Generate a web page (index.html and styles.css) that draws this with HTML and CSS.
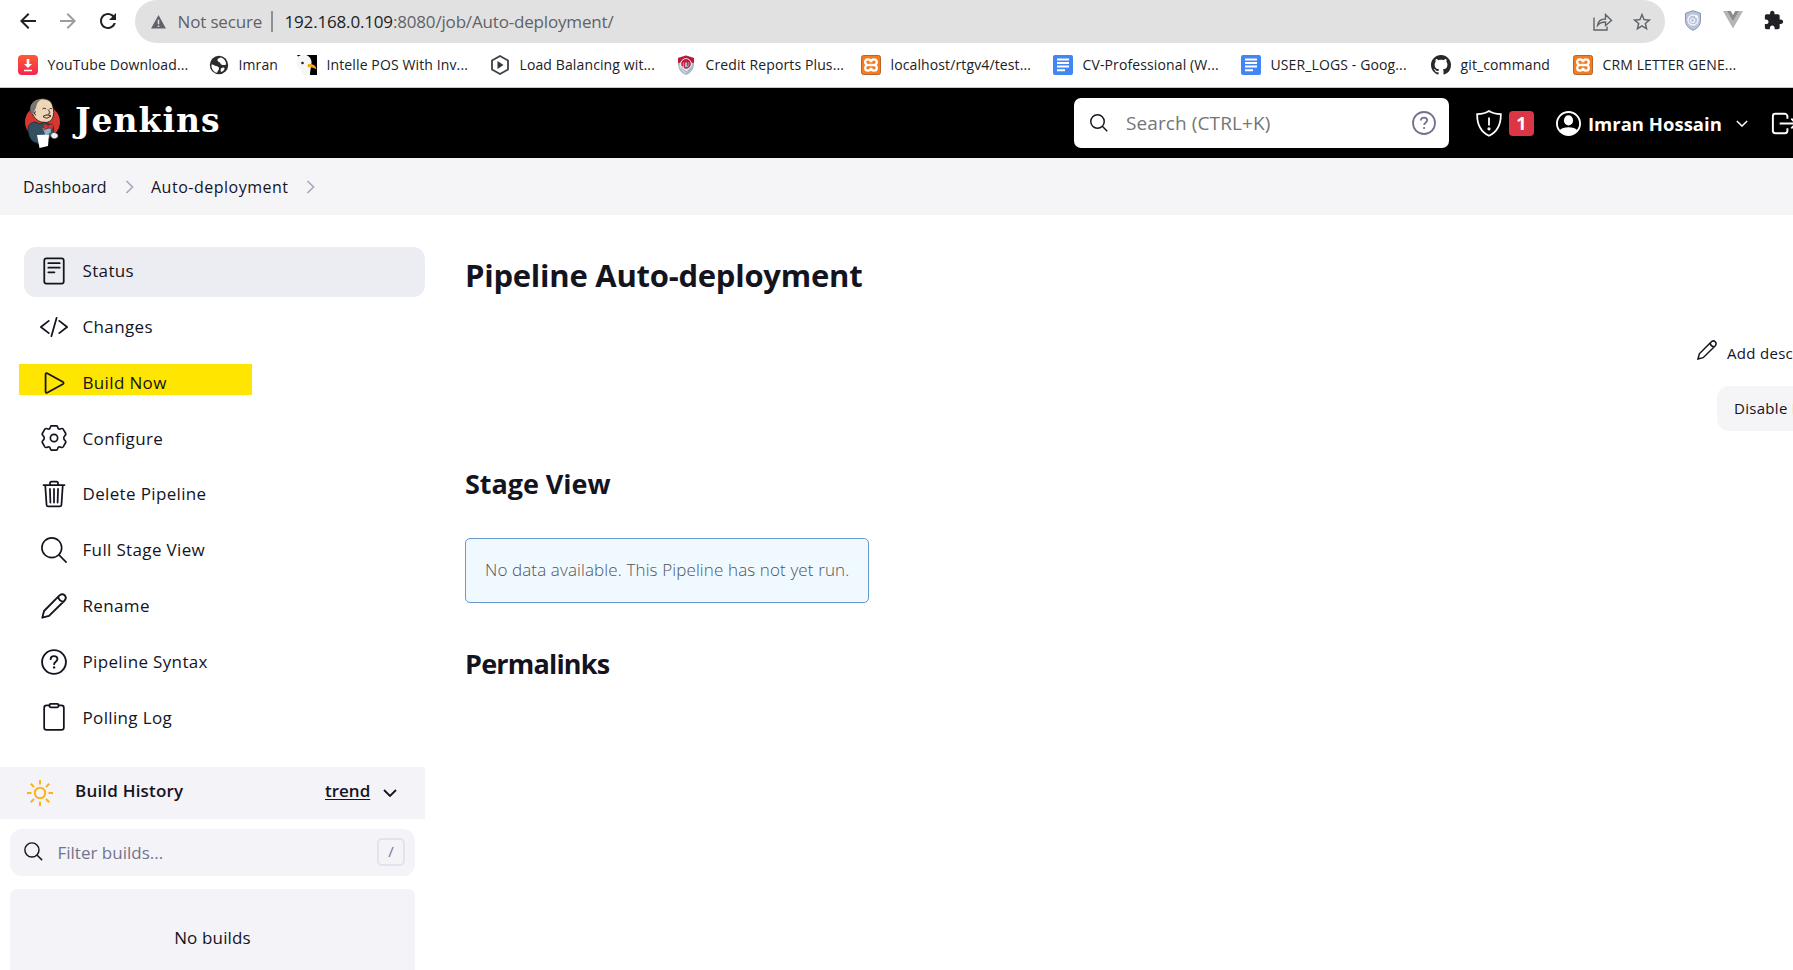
FILE: index.html
```html
<!DOCTYPE html>
<html lang="en">
<head>
<meta charset="utf-8">
<title>Auto-deployment [Jenkins]</title>
<link rel="stylesheet" href="styles.css">
</head>
<body>
<svg class="defs" width="0" height="0">
  <symbol id="search" viewBox="0 0 512 512"><path d="M221.09 64a157.09 157.09 0 10157.09 157.09A157.1 157.1 0 00221.09 64zM338.29 338.29L448 448"/></symbol>
  <symbol id="pencil" viewBox="0 0 24 24"><path d="M1.2 22.8L2.8 16.6 16.6 2.6C18.3.9 20.3.7 21.9 2.1 23.3 3.7 23.1 5.7 21.4 7.4L7.4 21.2zM16 3.200C16 6 18 8 20.900 8"/></symbol>
  <symbol id="help" viewBox="0 0 24 24"><circle cx="12" cy="12" r="11"/><path d="M8.9 9.4C8.9 7.6 10.2 6.6 12 6.6s3.2 1.1 3.2 2.7c0 2.4-3.1 2.4-3.1 4.7"/><circle class="dot" cx="12.1" cy="17" r="1.1"/></symbol>
  <symbol id="chev-r" viewBox="0 0 8 14"><path d="M1 1l6 6-6 6"/></symbol>
  <symbol id="chev-d" viewBox="0 0 14 8"><path d="M1 1l6 6 6-6"/></symbol>
  <symbol id="xampp" viewBox="0 0 20 20"><rect x=".5" y=".5" width="19" height="19" rx="2" fill="#f37b22" stroke="#b8652d"/><path d="M10 7.2C10 5 8.500 4.300 7 4.300S4.200 5.300 4.200 7 5.300 9.600 6.500 10C5.300 10.400 4.200 11.300 4.200 13S5.500 15.700 7 15.700 10 15 10 12.800C10 15 11.500 15.700 13 15.700S15.800 14.700 15.800 13 14.700 10.400 13.500 10C14.700 9.600 15.800 8.700 15.800 7S14.500 4.300 13 4.300 10 5 10 7.200zM7.500 10h5" fill="none" stroke="#fff" stroke-width="2.300"/></symbol>
  <symbol id="doc" viewBox="0 0 20 20"><rect width="20" height="20" rx="2" fill="#4285f4"/><path d="M4 4.500h12M4 8h12M4 11.500h12M4 15.200h8" stroke="#fff" stroke-width="1.900"/></symbol>
</svg>

<div class="toolbar">
  <svg class="nav" viewBox="0 0 24 24"><path d="M20 11H7.830l5.590-5.590L12 4l-8 8 8 8 1.410-1.410L7.830 13H20v-2z"/></svg>
  <svg class="nav fwd" viewBox="0 0 24 24"><path d="M12 4l-1.410 1.410L16.170 11H4v2h12.170l-5.580 5.590L12 20l8-8z"/></svg>
  <svg class="nav" viewBox="0 0 24 24"><path d="M17.650 6.350C16.200 4.900 14.210 4 12 4c-4.420 0-7.990 3.580-7.990 8s3.570 8 7.990 8c3.730 0 6.840-2.550 7.730-6h-2.080c-.820 2.330-3.040 4-5.650 4-3.310 0-6-2.690-6-6s2.690-6 6-6c1.660 0 3.140.690 4.220 1.780L13 11h7V4l-2.350 2.350z"/></svg>
  <div class="omnibox">
    <svg class="warn" viewBox="0 0 16 15"><path d="M8 0l8 14.500H0z" fill="#5f6368"/><path d="M8 5v5M8 11.200v1.600" stroke="#e1e1e1" stroke-width="1.600"/></svg>
    <span class="insecure">Not secure</span>
    <span class="url"><b>192.168.0.109</b>:8080/job/Auto-deployment/</span>
    <svg class="share" viewBox="0 0 20 18"><path d="M1 4.500V17h13v-3.500M4.500 12.500C5 8.500 8 6 12.500 6V1.500L18.500 7.500 12.500 12.500V9C9 9 6.500 10 4.500 12.500z"/></svg>
    <svg class="star" viewBox="0 0 24 24"><path d="M22 9.240l-7.190-.620L12 2 9.190 8.630 2 9.240l5.460 4.730L5.820 21 12 17.270 18.180 21l-1.630-7.030L22 9.240zM12 15.400l-3.760 2.270 1-4.280-3.320-2.880 4.380-.380L12 6.100l1.710 4.040 4.380.380-3.320 2.880 1 4.280L12 15.400z"/></svg>
  </div>
  <svg class="ext" width="18" height="21" viewBox="0 0 18 21"><path d="M9 .700l7.500 2.600v7C16.500 15 13.500 18.500 9 20.300 4.500 18.500 1.500 15 1.500 10.300v-7z" fill="#b9c3da" stroke="#8995b5"/><circle cx="9" cy="10" r="5" fill="none" stroke="#f1f4fa" stroke-width="1.400"/><circle cx="8.500" cy="10.500" r="2" fill="none" stroke="#f1f4fa" stroke-width="1.200"/><circle cx="12.500" cy="6.500" r="1.200" fill="#fff"/></svg>
  <svg class="ext" width="20" height="18" viewBox="0 0 20 18"><path d="M0 0h4l6 10.500L16 0h4L10 17.500z" fill="#b5b5b5"/><path d="M4 0h3.800L10 4l2.200-4H16l-6 10.500z" fill="#8a8a8a"/></svg>
  <svg class="ext puzzle" width="20" height="20" viewBox="1 0 23 23"><path d="M20.500 11H19V7c0-1.100-.900-2-2-2h-4V3.500C13 2.120 11.880 1 10.500 1S8 2.120 8 3.500V5H4c-1.100 0-1.990.900-1.990 2v3.800H3.500c1.490 0 2.700 1.210 2.700 2.700s-1.210 2.700-2.700 2.700H2V20c0 1.100.900 2 2 2h3.800v-1.500c0-1.490 1.210-2.700 2.700-2.700s2.700 1.210 2.700 2.700V22H17c1.100 0 2-.900 2-2v-4h1.500c1.380 0 2.500-1.120 2.500-2.500S21.880 11 20.500 11z" fill="#202124"/></svg>
</div>

<div class="bookmarks">
  <a class="bm"><svg viewBox="0 0 20 20"><defs><linearGradient id="yt" x2="0" y2="1"><stop stop-color="#fb5d33"/><stop offset="1" stop-color="#f5254f"/></linearGradient></defs><rect width="20" height="20" rx="4" fill="url(#yt)"/><path d="M8.700 4h2.600v5h2.700L10 13 6 9h2.700zM6 14.700h8v1.600H6z" fill="#fff"/></svg><span>YouTube Download...</span></a>
  <a class="bm"><svg viewBox="0 0 20 20"><circle cx="10" cy="10" r="9.200" fill="#292b2e"/><path d="M2.500 9.500c2-.500 3 1 4.500 1.500s3 .500 3 2.500-1.500 2-2 4.300C4.500 17 2 13.500 2.500 9.500zM12 2.500c-2.500.500-4 1.500-3.500 3S11 7 11.500 8.500s3 2 5.700 1C17 6 15 3.500 12 2.500zM12.500 13c1.500-1 3.500-.500 3 1s-2 2.500-3.500 3c-.500-1.500-.500-3 .500-4z" fill="#fff"/></svg><span>Imran</span></a>
  <a class="bm"><svg viewBox="0 0 20 20"><path d="M9 0h11v20h-8C14 14 14 5 9 0z" fill="#000"/><path d="M0 0h9c5 2 6.500 6 5 11-.500 4-1 6-1 9H6C5 15 1 14 0 10z" fill="#f6f6f5"/><path d="M0 0h4L1 1.500z" fill="#000"/><circle cx="5.500" cy="8" r="1.300" fill="#222"/><path d="M11 9c4-.500 8 1 8.500 5.500C16.500 12 13 13 10.500 12z" fill="#f9a51a"/></svg><span>Intelle POS With Inv...</span></a>
  <a class="bm"><svg viewBox="0 0 20 20"><path d="M10 1l8 4.500v9L10 19l-8-4.500v-9z" fill="#fff" stroke="#3c4248" stroke-width="1.800"/><path d="M7.500 6l6 4-6 4z" fill="#33383d"/></svg><span>Load Balancing wit...</span></a>
  <a class="bm"><svg viewBox="0 0 20 20"><path d="M10 .500l8 2.500v6c0 5-3 9-8 11-5-2-8-6-8-11V3z" fill="#a9b8c7"/><path d="M10 .500l8 2.500v5L10 7 2 8V3z" fill="#bd1839"/><g fill="none"><circle cx="10" cy="9" r="5.300" stroke="#fff"/><circle cx="10" cy="9" r="4" stroke="#c21c40" stroke-width="1.500"/><path d="M8.300 12V8.500c0-2.500 3.500-2.500 3.500 0V11" stroke="#c21c40" stroke-width="1.200"/><path d="M4 10c0 4 3 6 6 8M7 11c0 3 2 4 5 5" stroke="#e7edf2"/></g></svg><span>Credit Reports Plus...</span></a>
  <a class="bm"><svg><use href="#xampp"/></svg><span>localhost/rtgv4/test...</span></a>
  <a class="bm"><svg><use href="#doc"/></svg><span>CV-Professional (W...</span></a>
  <a class="bm"><svg><use href="#doc"/></svg><span>USER_LOGS - Goog...</span></a>
  <a class="bm"><svg viewBox="0 0 16 16"><path d="M8 0C3.580 0 0 3.580 0 8c0 3.540 2.290 6.530 5.470 7.590.400.070.550-.170.550-.380 0-.190-.010-.820-.010-1.490-2.010.370-2.530-.490-2.690-.940-.090-.230-.480-.940-.820-1.130-.280-.150-.680-.520-.010-.530.630-.010 1.080.580 1.230.820.720 1.210 1.870.870 2.330.660.070-.520.280-.870.510-1.070-1.780-.200-3.640-.890-3.640-3.950 0-.870.310-1.590.820-2.150-.080-.200-.360-1.020.080-2.120 0 0 .670-.210 2.200.820.640-.180 1.320-.270 2-.270s1.360.090 2 .270c1.530-1.040 2.200-.820 2.200-.820.440 1.100.160 1.920.080 2.120.510.560.820 1.270.820 2.150 0 3.070-1.870 3.750-3.650 3.950.290.250.540.730.540 1.480 0 1.070-.010 1.930-.010 2.200 0 .210.150.460.550.380A8.010 8.010 0 0016 8c0-4.420-3.580-8-8-8z" fill="#24292e"/></svg><span>git_command</span></a>
  <a class="bm"><svg><use href="#xampp"/></svg><span>CRM LETTER GENE...</span></a>
</div>

<header class="header">
  <svg class="butler" viewBox="0 0 37 51">
    <ellipse cx="18.500" cy="24" rx="17.500" ry="17" fill="#d33833"/>
    <path d="M8.500 16C5 14 6 7 9.500 4c5-5 16.500-4 18.500 2 1.500 4 2 8 1.500 11-1 5-4 7.500-9 7.500C14.500 24 11 21 8.500 16z" fill="#efd6b9" stroke="#1b1311" stroke-width=".800"/>
    <path d="M12 2.500C6 5 5 11 8 16l2.200-.500c-.200-3 1.300-3.500 1.800-6C13 7 12 5 17 1.500z" fill="#7b7676"/>
    <path d="M18.500 11c1-1 2.500-1 3.500 0M25.500 11c1-.700 2-.700 2.500 0M24 11.500c2 2.500 2.500 4.500 0 4.500M19 18.500c3-2 5-2 8-.500-3 1.500-4 3.500-8 .500zM12 14c-2-1-2 3 0 3" fill="none" stroke="#2b1b17" stroke-width="1"/>
    <path d="M11 24c-5 1-6.500 3-7 7 .500 6 2 11 6 13l5 2 10-7 4-1c1-5 1-9-1-11l-8-3-4 2z" fill="#335061" stroke="#142630" stroke-width=".800"/>
    <path d="M18.500 30l5 1 4-2-1 6-5 2z" fill="#8fb3c4"/>
    <path d="M19.500 25.500l4.500 2.300 4.500-2.300c1 2 .500 4 0 6l-4.500-2-3.500 2.500c-1-2-1-4-1-6.500z" fill="#d33833" stroke="#81201e" stroke-width=".600"/>
    <path d="M13 37l12-.500-1 11.500-8.500 2z" fill="#fff"/>
    <path d="M26.500 37c2-3 4-3 6-1.500 2 .500 2 4 0 4.500-2 1.500-5 1-6-3z" fill="#eee" stroke="#39444b" stroke-width=".700"/>
  </svg>
  <span class="wordmark">Jenkins</span>
  <div class="searchbox">
    <svg class="ico"><use href="#search"/></svg>
    <span>Search (CTRL+K)</span>
    <svg class="qm"><use href="#help"/></svg>
  </div>
  <svg class="shield" viewBox="0 0 26 27"><path d="M13 1C10 3 6 4 1.200 4.200 1 14 4 21.500 13 25.800 22 21.500 25 14 24.800 4.200 20 4 16 3 13 1zM13 7.500v8"/><circle cx="13" cy="18.800" r=".700"/></svg>
  <span class="badge">1</span>
  <svg class="user" viewBox="0 0 24 24"><circle cx="12" cy="12" r="11.100" fill="none" stroke="#fff" stroke-width="1.800"/><ellipse cx="12" cy="9" rx="4.400" ry="4.900" fill="#fff"/><path d="M3.500 18.500C6 14.500 18 14.500 20.500 18.500 18 22 15 23 12 23s-6-1-8.500-4.500z" fill="#fff"/></svg>
  <span class="name">Imran Hossain</span>
  <svg class="namechev"><use href="#chev-d"/></svg>
  <svg class="logout" viewBox="0 0 512 512"><path d="M304 336v40a40 40 0 01-40 40H104a40 40 0 01-40-40V136a40 40 0 0140-40h152c22.090 0 48 17.910 48 40v40M368 336l80-80-80-80M176 256h256"/></svg>
</header>

<nav class="crumbs">
  <span class="c1">Dashboard</span><svg><use href="#chev-r"/></svg>
  <span class="c2">Auto-deployment</span><svg><use href="#chev-r"/></svg>
</nav>

<div class="page">
  <aside class="side">
    <div class="tasks">
      <a class="task active"><svg viewBox="0 0 512 512"><rect x="78" y="24" width="356" height="464" rx="40"/><path d="M152 112h208M152 196h208M152 280h112"/></svg><span>Status</span></a>
      <a class="task"><svg viewBox="0 0 512 512"><path d="M160 368L16 256l144-112M352 368l144-112-144-112M304 88l-96 336"/></svg><span>Changes</span></a>
      <a class="task marked"><svg viewBox="0 0 512 512"><path d="M102 96v320c0 16 14 24 28 17l292-160c12-7 12-27 0-34L130 79c-14-7-28 1-28 17z"/></svg><span>Build Now</span></a>
      <a class="task"><svg class="gear" viewBox="-12.500 -12.500 25 25"><path d="M-2.400-11.600H2.400Q3.500-11.600 3.500-10.400 3.800-8 5.800-8.600 8-9.700 8.800-8.500L11.100-4.600Q11.700-3.400 10.700-2.600 8 0 10.700 2.600 11.700 3.400 11.100 4.600L8.800 8.500Q8 9.700 5.800 8.600 3.800 8 3.500 10.400 3.500 11.600 2.400 11.600H-2.400Q-3.500 11.600-3.500 10.400-3.800 8-5.800 8.600-8 9.700-8.800 8.500L-11.100 4.600Q-11.700 3.400-10.700 2.600-8 0-10.700-2.600-11.700-3.400-11.100-4.600L-8.800-8.500Q-8-9.700-5.800-8.600-3.800-8-3.500-10.400-3.500-11.600-2.400-11.600z"/><circle r="3.500"/></svg><span>Configure</span></a>
      <a class="task"><svg viewBox="0 0 512 512"><path d="M96 100l24 356c1 18 14 28 30 28h212c16 0 29-10 30-28l24-356M64 92h384M182 90V60c0-18 12-30 30-30h88c18 0 30 12 30 30v30M256 164v248M182 164l8 248M330 164l-8 248"/></svg><span>Delete Pipeline</span></a>
      <a class="task"><svg class="mag" viewBox="34 34 444 444"><path d="M221 64a157 157 0 10157 157A157 157 0 00221 64zM338 338L448 448"/></svg><span>Full Stage View</span></a>
      <a class="task"><svg class="pen"><use href="#pencil"/></svg><span>Rename</span></a>
      <a class="task"><svg class="hlp"><use href="#help"/></svg><span>Pipeline Syntax</span></a>
      <a class="task"><svg viewBox="0 0 512 512"><path d="M336 42h56a44 44 0 0144 44v360a44 44 0 01-44 44H120a44 44 0 01-44-44V86a44 44 0 0144-44h56"/><rect x="170" y="16" width="172" height="64" rx="28"/></svg><span>Polling Log</span></a>
    </div>
    <div class="history">
      <svg class="sun" viewBox="-13 -13 26 26"><circle r="5.200"/><path d="M0-13v4.500M0 13V8.500M-13 0h4.500M13 0H8.500M-9.200-9.200l3.200 3.200M9.200 9.200L6 6M-9.200 9.200L-6 6M9.200-9.200L6-6"/></svg>
      <b>Build History</b><u>trend</u><svg class="hchev"><use href="#chev-d"/></svg>
    </div>
    <div class="filter"><svg><use href="#search"/></svg><span>Filter builds...</span><kbd>/</kbd></div>
    <div class="none">No builds</div>
  </aside>
  <main class="main">
    <h1>Pipeline Auto-deployment</h1>
    <div class="actions">
      <a class="add"><svg><use href="#pencil"/></svg><span>Add description</span></a>
      <a class="disable">Disable Project</a>
    </div>
    <h2 class="stage">Stage View</h2>
    <div class="notice">No data available. This Pipeline has not yet run.</div>
    <h2 class="perma">Permalinks</h2>
  </main>
</div>
</body>
</html>
```
FILE: styles.css
```css
* { box-sizing: border-box; }
html, body { margin: 0; height: 970px; overflow: hidden; }
body { width: 1793px; background: #fff; color: #14141f; font-family: "Open Sans", "Noto Sans", sans-serif; font-size: 17px; white-space: nowrap; }
svg { display: block; flex: none; fill: none; }
svg.defs { position: absolute; }

/* browser chrome */
.toolbar { height: 43px; display: flex; align-items: center; padding-left: 15.5px; }
.nav { width: 24px; height: 24px; margin-right: 16px; margin-top: -2px; fill: #202124; }
.nav.fwd { fill: #9b9da0; }
.omnibox { width: 1530px; height: 43px; margin-left: -.5px; padding: 0 12px 0 15.5px; border-radius: 22px; background: #e1e1e1; display: flex; align-items: center; color: #5f6368; font-size: 17px; }
.warn { width: 15px; height: 14px; }
.insecure { width: 95px; margin-left: 12px; border-right: 2px solid #8f9193; line-height: 21px; letter-spacing: -.15px; }
.url { margin-left: 12px; flex: 1; letter-spacing: -.17px; }
.url b { font-weight: 400; color: #202124; }
.share { width: 20px; height: 18px; stroke: #5f6368; stroke-width: 1.4; margin-right: 18px; }
.star { width: 22px; height: 22px; fill: #5f6368; }
.ext { margin: -3px 0 0 19px; }
.ext + .ext { margin-left: 21px; }
.puzzle { margin-right: -5px; }
.bookmarks { height: 45px; border-bottom: 1px solid #c8c8c8; padding: 12px 0 0 18px; display: grid; grid-template-columns: 191px 88px 193px 186px 185px 192px 188px 190px 142px 170px; }
.bm { display: flex; height: 20px; align-items: center; font-size: 14px; letter-spacing: .12px; color: #202124; }
.bm svg { width: 20px; height: 20px; margin-right: 9.5px; }
.bm span { line-height: 20px; }

/* header */
.header { height: 70px; background: #000; color: #fff; display: flex; align-items: center; padding-left: 24px; }
.header > * { flex-shrink: 0; }
.butler { width: 37px; height: 51px; }
.wordmark { font: bold 33px/36px "DejaVu Serif", serif; width: 160px; margin: -4px 0 0 14px; letter-spacing: 1px; }
.searchbox { width: 375px; height: 50px; margin-left: 839px; border-radius: 7px; background: #fff; color: #757575; display: flex; align-items: center; font-size: 19px; letter-spacing: .1px; padding: 0 13px 0 14px; }
.searchbox .ico { width: 22px; height: 22px; stroke: #14141f; stroke-width: 34; margin-right: 16px; }
.searchbox span { flex: 1; }
.qm { width: 24px; height: 24px; stroke: #73738c; stroke-width: 1.8; }
.dot { fill: currentColor; stroke: none; }
.shield { width: 26px; height: 27px; margin-left: 27px; stroke: #fff; stroke-width: 1.8; }
.badge { width: 25px; height: 25px; margin-left: 7px; border-radius: 4px; background: #dc3545; font-weight: 700; font-size: 18px; line-height: 25px; text-align: center; }
.user { width: 25px; height: 25px; margin-left: 22px; }
.name { width: 141px; margin-left: 7px; font-weight: 700; font-size: 18.5px; }
.namechev { width: 12px; height: 7px; margin-left: 7px; stroke: #fff; stroke-width: 1.7; }
.logout { width: 31px; height: 31px; margin-left: 21px; stroke: #fff; stroke-width: 32; }
.crumbs { height: 57px; background: #f5f5f8; display: flex; align-items: center; padding-left: 23px; font-size: 16px; font-weight: 500; }
.crumbs svg { width: 9px; height: 14px; stroke: #a9a9bd; stroke-width: 1.7; }
.c1 { width: 102px; letter-spacing: .13px; }
.c2 { width: 155px; margin-left: 17px; letter-spacing: .5px; }

/* sidebar */
.page { display: flex; height: 755px; }
.side { width: 425px; flex: none; }
.tasks { padding: 32px 0 0 24px; display: grid; grid-auto-rows: 50px; row-gap: 5.8px; height: 552px; }
.task { display: flex; align-items: center; padding-left: 16px; border-radius: 12px; font-size: 17px; font-weight: 500; letter-spacing: .35px; }
.task span { margin-top: -2.5px; }
.task.active { background: #ecedf3; }
.task.marked { background: linear-gradient(#ffe600, #ffe600) 0 5px / 233px 31px no-repeat; margin-left: -5px; padding-left: 21px; border-radius: 0; }
.task svg { width: 28px; height: 28px; margin: -2px 14.5px 0 0; stroke: #14141f; stroke-width: 32; stroke-linecap: round; stroke-linejoin: round; }
.task svg.mag { stroke-width: 26; }
.task svg.gear { stroke-width: 1.6; padding: 1px; }
.task svg.pen, .task svg.hlp { stroke-width: 1.7; padding: 1px; }
.history { height: 52px; background: #f3f3f8; display: flex; align-items: center; padding-left: 27px; font-size: 17px; }
.sun { width: 26px; height: 26px; stroke: #ffb11b; stroke-width: 2; }
.history b { width: 250px; margin: -5px 0 0 22px; font-weight: 600; letter-spacing: .2px; }
.history u { width: 58px; margin-top: -5px; font-weight: 600; text-underline-offset: 2px; }
.hchev { width: 14px; height: 8px; stroke: #14141f; stroke-width: 1.8; }
.filter { height: 47px; margin: 10px 10px 0; border-radius: 12px; background: #f3f3f8; display: flex; align-items: center; padding: 0 10px 0 12px; color: #73738c; font-weight: 500; }
.filter svg { width: 23px; height: 23px; margin: -2px 12.5px 0 0; stroke: #14141f; stroke-width: 32; }
.filter span { flex: 1; }
.filter kbd { width: 28px; height: 28px; margin-top: -2px; border: 2px solid #e3e3ed; border-radius: 5px; font: 500 15px/23px "Open Sans", sans-serif; text-align: center; }
.none { margin: 13px 10px 0; height: 90px; border-radius: 7px 7px 0 0; background: #f3f3f8; text-align: center; line-height: 98px; font-weight: 500; letter-spacing: .15px; }

/* content */
.main { width: 1450px; flex: none; padding: 37px 0 0 40px; }
h1, h2 { margin: 0; font-weight: 700; }
h1 { font-size: 31px; line-height: 46px; letter-spacing: -.25px; }
.actions { height: 132px; padding-top: 40px; display: flex; flex-direction: column; font-size: 15px; font-weight: 500; letter-spacing: .3px; }
.add { display: flex; height: 26px; padding-left: 1232px; line-height: 30px; }
.add svg { width: 20px; height: 20px; stroke: #14141f; stroke-width: 1.8; margin: 2px 10px 0 0; }
.disable { width: 150px; height: 45px; margin: 22px 0 0 1252px; border-radius: 12px; background: #f5f5f8; line-height: 45px; padding-left: 17px; }
.stage, .perma { font-size: 27px; line-height: 40px; }
.stage { margin-top: 34px; letter-spacing: -.05px; }
.notice { width: 404px; height: 65px; margin-top: 34px; border: 1px solid #6699cc; border-radius: 5px; background: #f0f9ff; color: #4d545a; font-size: 17px; font-weight: 300; line-height: 62px; padding-left: 19px; letter-spacing: .12px; }
.perma { margin-top: 41px; letter-spacing: -.8px; }
```
